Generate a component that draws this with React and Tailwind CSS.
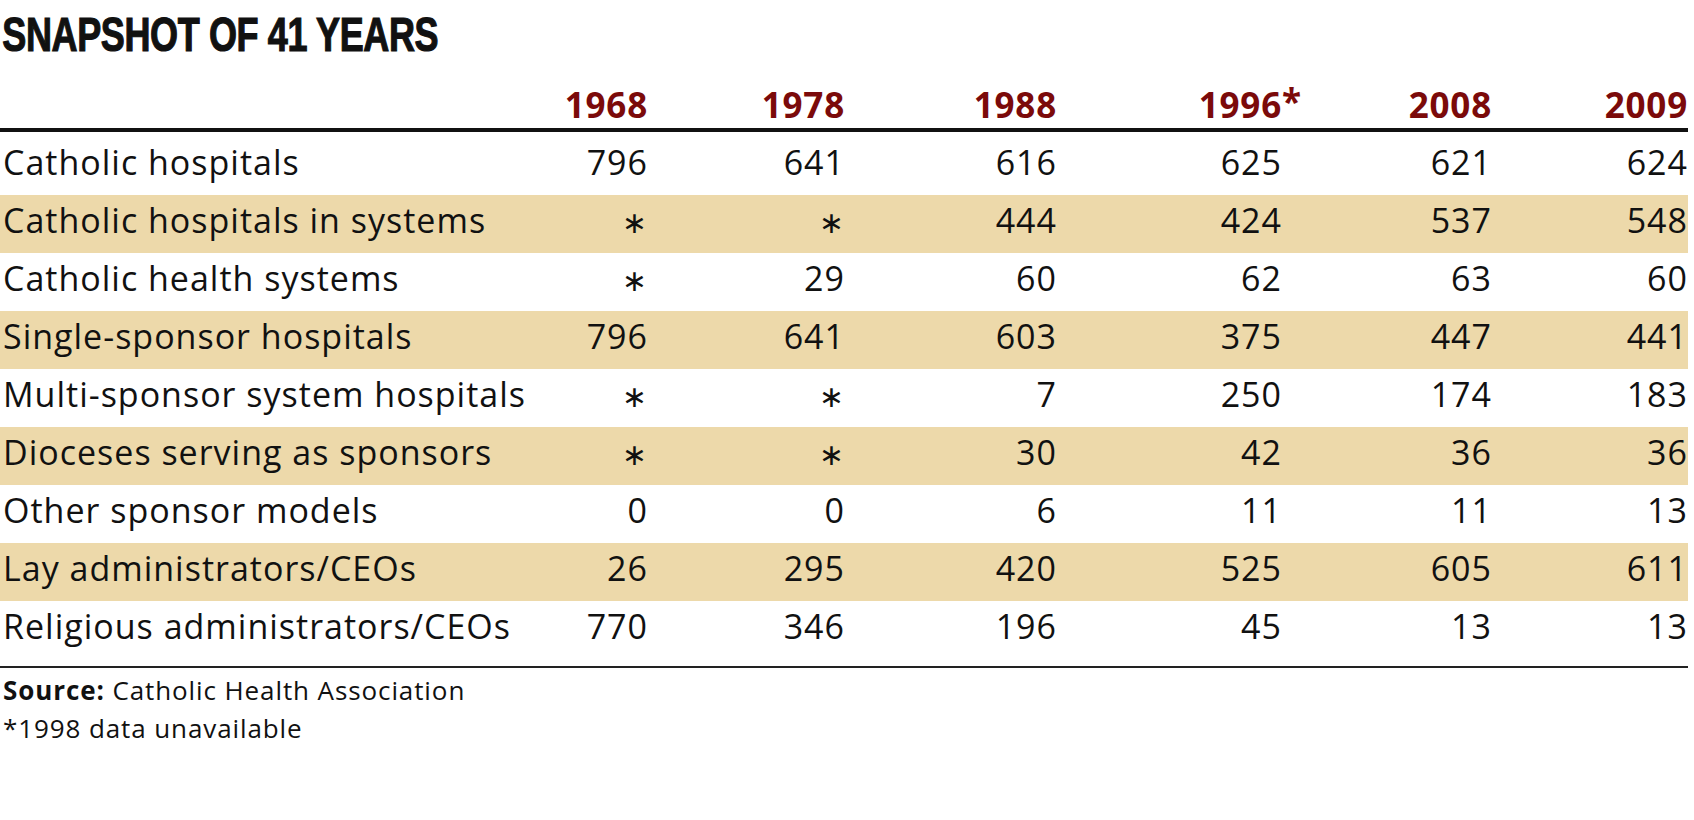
const YEARS = ["1968", "1978", "1988", "1996", "2008", "2009"];

const ROWS = [
  ["Catholic hospitals", "796", "641", "616", "625", "621", "624"],
  ["Catholic hospitals in systems", "*", "*", "444", "424", "537", "548"],
  ["Catholic health systems", "*", "29", "60", "62", "63", "60"],
  ["Single-sponsor hospitals", "796", "641", "603", "375", "447", "441"],
  ["Multi-sponsor system hospitals", "*", "*", "7", "250", "174", "183"],
  ["Dioceses serving as sponsors", "*", "*", "30", "42", "36", "36"],
  ["Other sponsor models", "0", "0", "6", "11", "11", "13"],
  ["Lay administrators/CEOs", "26", "295", "420", "525", "605", "611"],
  ["Religious administrators/CEOs", "770", "346", "196", "45", "13", "13"],
];

const GRID = "grid grid-cols-[450px_198px_197px_212px_225px_210px_196px]";

export default function App() {
  return (
    <div className="w-[1694px] h-[820px] bg-white text-[#111] font-['Open_Sans',sans-serif]">
      {/* Title */}
      <div className="h-[70px]">
        <h1 className="pt-[11px] pl-[3px] text-[48px] leading-[48px] font-bold font-['Liberation_Sans',sans-serif] tracking-[-0.5px] whitespace-nowrap origin-left scale-x-[0.75] [-webkit-text-stroke:1.2px_#111]">
          SNAPSHOT OF 41 YEARS
        </h1>
      </div>

      <div className="w-[1688px]">
        {/* Year header */}
        <div className={`${GRID} h-[62px] items-end pb-[3px] border-b-4 border-[#111]`}>
          <div />
          {YEARS.map((y) => (
            <div key={y} className="text-right text-[35px] leading-[40px] font-bold text-[#7b0a0a] tracking-[0.8px]">
              {y === "1996" ? (
                <span className="relative">
                  1996
                  <span className="absolute left-full top-0">*</span>
                </span>
              ) : (
                y
              )}
            </div>
          ))}
        </div>

        {/* Rows */}
        <div className="mt-[5px]">
          {ROWS.map((row, i) => (
            <div
              key={row[0]}
              className={`${GRID} h-[58px] text-[34px] leading-[50px] tracking-[1px] ${i % 2 === 1 ? "bg-[#edd9aa]" : ""}`}
            >
              <div className="pl-[3px] whitespace-nowrap">{row[0]}</div>
              {row.slice(1).map((v, j) => (
                <div key={j} className="text-right">
                  {v === "*" ? <span className="font-['DejaVu_Sans',sans-serif] text-[30px]">∗</span> : v}
                </div>
              ))}
            </div>
          ))}
        </div>

        <div className="mt-[7px] border-t-2 border-[#222]" />

        {/* Footer */}
        <div className="mt-[3px] pl-[3px] text-[26px] leading-[38px] tracking-[0.9px]">
          <p>
            <span className="font-bold">Source:</span> Catholic Health Association
          </p>
          <p>*1998 data unavailable</p>
        </div>
      </div>
    </div>
  );
}
